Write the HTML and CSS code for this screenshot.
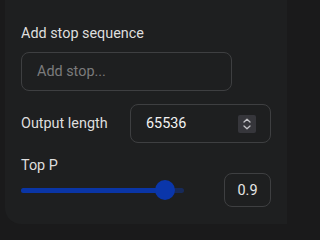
FILE: index.html
```html
<!DOCTYPE html>
<html>
<head>
<meta charset="utf-8">
<link rel="stylesheet" href="styles.css">
</head>
<body>
<div class="panel">
  <div class="content">
    <div class="label label-first">Add stop sequence</div>
    <div class="stop-input"><span class="placeholder">Add stop...</span></div>

    <div class="row-output">
      <div class="label">Output length</div>
      <div class="num-input">
        <span class="num-value">65536</span>
        <span class="spinner">
          <svg width="18" height="18" viewBox="0 0 18 18" fill="none" stroke="#c4c4c8" stroke-width="1.3" stroke-linecap="round" stroke-linejoin="round">
            <path d="M6 7 L9 4.3 L12 7"/>
            <path d="M6 11 L9 13.7 L12 11"/>
          </svg>
        </span>
      </div>
    </div>

    <div class="topp">
      <div class="label label-topp">Top P</div>
      <div class="slider">
        <div class="track"></div>
        <div class="track-active"></div>
        <div class="thumb"></div>
      </div>
      <div class="value-box">0.9</div>
    </div>
  </div>
</div>
</body>
</html>
```

FILE: styles.css
```css
html, body {
  margin: 0;
  padding: 0;
}
body {
  background: #1a1a1b;
  font-family: Roboto, "Liberation Sans", sans-serif;
  overflow: hidden;
}
.panel {
  margin-left: 5px;
  width: 282px;
  height: 224px;
  box-sizing: border-box;
  background: #1e1f20;
  border-bottom-left-radius: 16px;
  padding: 24px 16px 0 16px;
}
.content {
  width: 250px;
}
.label {
  color: #dedede;
  font-size: 14.4px;
  line-height: 20px;
}
.stop-input {
  margin-top: 8px;
  width: 211px;
  height: 39px;
  box-sizing: border-box;
  border: 1px solid #3e3f41;
  border-radius: 8px;
  display: flex;
  align-items: center;
  padding-left: 15px;
}
.placeholder {
  color: #7b7b7c;
  font-size: 14.4px;
  line-height: 20px;
}
.row-output {
  margin-top: 13px;
  display: flex;
  align-items: center;
  justify-content: space-between;
}
.num-input {
  width: 141px;
  height: 39px;
  box-sizing: border-box;
  border: 1px solid #3e3f41;
  border-radius: 8px;
  display: flex;
  align-items: center;
  justify-content: space-between;
  padding: 0 14px 0 15px;
}
.num-value {
  color: #f2f2f2;
  font-size: 14.4px;
  line-height: 20px;
}
.spinner {
  width: 18px;
  height: 18px;
  background: #36363b;
  border-radius: 2px;
  display: flex;
}
.topp {
  margin-top: 14px;
  display: grid;
  grid-template-columns: 163px 1fr;
  grid-template-rows: 16px 34px;
  align-items: center;
}
.label-topp {
  line-height: 18px;
  align-self: start;
  grid-column: 1 / 3;
}
.slider {
  position: relative;
  height: 20px;
  width: 163px;
}
.track {
  position: absolute;
  left: 0;
  right: 0;
  top: 8px;
  height: 5px;
  border-radius: 3px;
  background: #172a5a;
}
.track-active {
  position: absolute;
  left: 0;
  width: 144px;
  top: 8px;
  height: 5px;
  border-radius: 3px 0 0 3px;
  background: #0a35a6;
}
.thumb {
  position: absolute;
  left: 134px;
  top: 0;
  width: 20px;
  height: 20px;
  border-radius: 50%;
  background: #0a36aa;
}
.value-box {
  justify-self: end;
  width: 47px;
  height: 34px;
  box-sizing: border-box;
  border: 1px solid #3e3f41;
  border-radius: 8px;
  color: #e6e6e6;
  font-size: 14.4px;
  display: flex;
  align-items: center;
  justify-content: center;
}
```
